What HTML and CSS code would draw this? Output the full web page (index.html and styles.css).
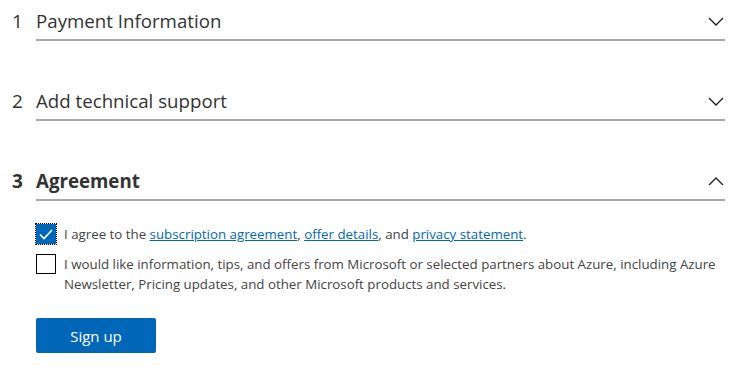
FILE: index.html
```html
<!DOCTYPE html>
<html lang="en">
<head>
    <meta charset="UTF-8">
    <meta name="viewport" content="width=device-width, initial-scale=1.0">
    <title>Azure sign up - Agreement</title>
    <link rel="stylesheet" href="styles.css">
</head>
<body>
    <div class="steps">
        <!-- Step 1 -->
        <section class="step">
            <span class="step-num">1</span>
            <div class="step-head">
                <h2>Payment Information</h2>
                <svg class="chevron" width="16" height="9" viewBox="0 0 16 9"><path d="M1 1 L8 8 L15 1" fill="none" stroke="#222" stroke-width="1.4"/></svg>
            </div>
        </section>

        <!-- Step 2 -->
        <section class="step">
            <span class="step-num">2</span>
            <div class="step-head">
                <h2>Add technical support</h2>
                <svg class="chevron" width="16" height="9" viewBox="0 0 16 9"><path d="M1 1 L8 8 L15 1" fill="none" stroke="#222" stroke-width="1.4"/></svg>
            </div>
        </section>

        <!-- Step 3 (open) -->
        <section class="step open">
            <span class="step-num">3</span>
            <div class="step-body">
                <div class="step-head">
                    <h2>Agreement</h2>
                    <svg class="chevron" width="16" height="9" viewBox="0 0 16 9"><path d="M1 8 L8 1 L15 8" fill="none" stroke="#222" stroke-width="1.4"/></svg>
                </div>

                <div class="checks">
                    <label class="check">
                        <span class="box checked focus">
                            <svg width="14" height="11" viewBox="0 0 14 11"><path d="M1 5.5 L5 9.5 L13 1" fill="none" stroke="#fff" stroke-width="1.6"/></svg>
                        </span>
                        <span class="check-text">I agree to the <a href="#">subscription agreement</a>, <a href="#">offer details</a>, and <a href="#">privacy statement</a>.</span>
                    </label>
                    <label class="check">
                        <span class="box"></span>
                        <span class="check-text">I would like information, tips, and offers from Microsoft or selected partners about Azure, including Azure Newsletter, Pricing updates, and other Microsoft products and services.</span>
                    </label>
                </div>

                <button class="btn-primary" type="button">Sign up</button>
            </div>
        </section>
    </div>
</body>
</html>
```

FILE: styles.css
```css
* {
    box-sizing: border-box;
    margin: 0;
    padding: 0;
}

body {
    font-family: 'Open Sans', 'Noto Sans', sans-serif;
    background-color: #fff;
    color: #333;
}

.steps {
    padding: 0 0 0 12px;
}

.step {
    display: flex;
    margin-bottom: 39px;
}

.step:last-child {
    margin-bottom: 0;
}

.step-num {
    width: 24px;
    font-size: 19px;
    line-height: 28px;
    padding-top: 7px;
    color: #333;
}

.step-head {
    width: 689px;
    display: flex;
    align-items: center;
    justify-content: space-between;
    padding: 7px 0 4px;
    border-bottom: 2px solid #a8a8a8;
}

.step-head h2 {
    font-size: 18.7px;
    font-weight: 400;
    line-height: 28px;
    color: #333;
}

.chevron {
    margin-right: 1px;
}

.step.open .step-num,
.step.open h2 {
    font-weight: 700;
}

.step-body {
    width: 708px;
}

/* Checkboxes */
.checks {
    margin-top: 23px;
    display: flex;
    flex-direction: column;
    gap: 10px;
}

.check {
    display: flex;
    align-items: flex-start;
    gap: 8px;
    font-size: 13.3px;
    line-height: 20px;
    color: #444;
}

.box {
    flex: none;
    width: 20px;
    height: 20px;
    border: 1px solid #000;
    display: flex;
    align-items: center;
    justify-content: center;
}

.box.checked {
    background-color: #0067b8;
    border-color: #0067b8;
}

.box.focus {
    outline: 1px dotted #000;
    outline-offset: 0;
}

.check-text a {
    color: #0067b8;
    text-decoration: underline;
}

/* Button */
.btn-primary {
    margin-top: 24px;
    width: 120px;
    height: 35px;
    border: none;
    border-radius: 2px;
    background-color: #0067b8;
    color: #fff;
    font-family: inherit;
    font-size: 15px;
    cursor: pointer;
}
```
